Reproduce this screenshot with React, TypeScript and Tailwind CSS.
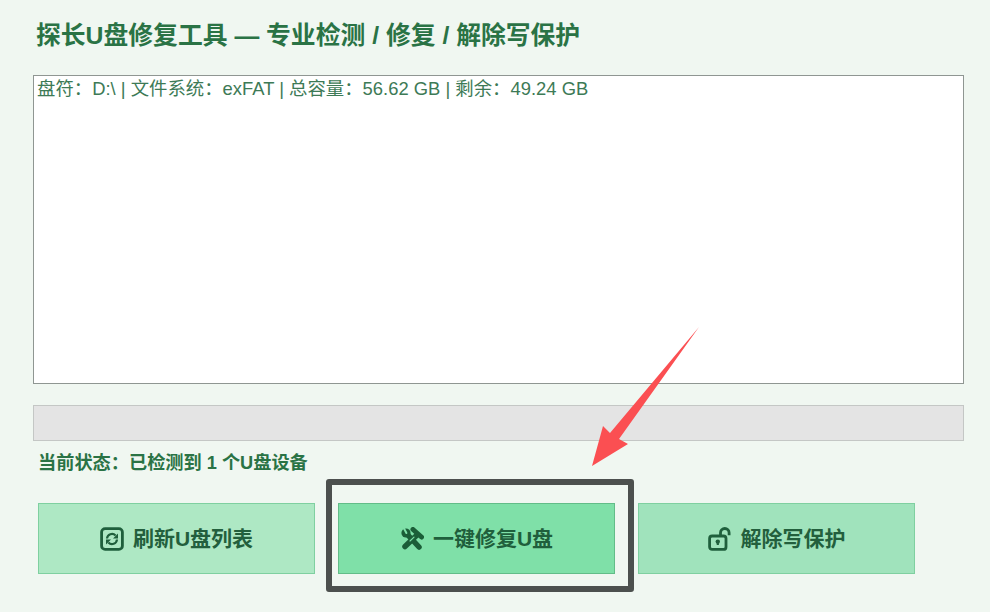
import React from "react";

const cjk = "font-['Liberation_Sans','Noto_Sans_CJK_SC',sans-serif]";

const RefreshIcon = () => (
  <svg width="24" height="24" viewBox="0 0 24 24" fill="none" stroke="#1f5f3c" strokeWidth="2.8">
    <rect x="1.6" y="1.6" width="20.8" height="20.8" rx="3.5" />
    <path d="M7 11.5a5 5 0 0 1 8.6-3" strokeWidth="2.2" />
    <path d="M17 12.5a5 5 0 0 1-8.6 3" strokeWidth="2.2" />
    <path d="M18 6.5v5h-5z M6 17.5v-5h5z" fill="#1f5f3c" stroke="none" />
  </svg>
);

const ToolsIcon = () => (
  <svg width="24" height="24" viewBox="0 0 24 24" fill="none" stroke="#1b5e38" strokeLinecap="round">
    <path d="M6 6 19 20" strokeWidth="5.5" />
    <path d="M5 19.5 17 8" strokeWidth="5.5" />
    <path d="M13 2.5 21.5 10" strokeWidth="5" />
    <circle cx="6" cy="6" r="4.6" fill="#1b5e38" stroke="none" />
    <path d="M4 1.5 6.4 6" stroke="#7fe0a8" strokeWidth="2" />
    <path d="m10 14 4-3.8" stroke="#7fe0a8" strokeWidth="1.1" />
  </svg>
);

const UnlockIcon = () => (
  <svg width="24" height="24" viewBox="0 0 24 24" fill="none" stroke="#1f5f3c" strokeWidth="2.8">
    <rect x="1.6" y="9" width="16.4" height="13.4" rx="2.5" />
    <path d="M12.5 9V5.8a4.3 4.3 0 0 1 8.6 0v2.4" />
    <circle cx="9.8" cy="14.6" r="2.2" fill="#1f5f3c" stroke="none" />
    <path d="M9.8 15v3" strokeWidth="2.2" />
  </svg>
);

export default function App() {
  return (
    <div className={`relative w-[990px] h-[612px] overflow-hidden bg-[#f0f7f1] ${cjk}`}>
      <div className="flex flex-col px-[33px] pt-[21px]">
        <h1 className="pl-[3px] h-[30px] text-[24.8px] leading-[30px] font-bold text-[#2a7345] whitespace-nowrap">
          探长U盘修复工具 — 专业检测 / 修复 / 解除写保护
        </h1>

        <div className="mt-[24px] h-[309px] w-[931px] border border-[#8f9692] bg-white px-[3px] pt-[2px] text-[18.4px] leading-[22px] text-[#3d7a56] whitespace-nowrap">
          盘符：D:\ | 文件系统：exFAT | 总容量：56.62 GB | 剩余：49.24 GB
        </div>

        <div className="mt-[21px] h-[36px] w-[931px] border border-[#c4c7c5] bg-[#e4e4e4]" />

        <p className="mt-[10px] pl-[5px] h-[24px] text-[18.2px] leading-[24px] font-bold text-[#2a7345] whitespace-nowrap">
          当前状态：已检测到 1 个U盘设备
        </p>

        <div className="mt-[28px] pl-[5px] flex gap-[23px]">
          <button className="flex h-[71px] w-[277px] items-center justify-center gap-[9px] border border-[#7fd0a0] bg-[#aee8c4] text-[21px] font-bold text-[#235f3d]">
            <RefreshIcon />
            <span>刷新U盘列表</span>
          </button>
          <button className="flex h-[71px] w-[277px] items-center justify-center gap-[9px] border border-[#62bd88] bg-[#7fe0a8] text-[21px] font-bold text-[#1f5f3c]">
            <ToolsIcon />
            <span>一键修复U盘</span>
          </button>
          <button className="flex h-[71px] w-[277px] items-center justify-center gap-[9px] border border-[#7fd0a0] bg-[#a0e3bc] text-[21px] font-bold text-[#235f3d]">
            <UnlockIcon />
            <span>解除写保护</span>
          </button>
        </div>
      </div>

      {/* annotation drawn over the screenshot */}
      <div className="absolute left-[326px] top-[479px] h-[113px] w-[308px] rounded-[3px] border-[6px] border-[#4c504e]" />
      <svg className="absolute left-0 top-0 pointer-events-none" width="990" height="612" viewBox="0 0 990 612">
        <polygon points="592,466 603,426 610,433 699,327 619,439 628,444" fill="#fb4f52" />
      </svg>
    </div>
  );
}
